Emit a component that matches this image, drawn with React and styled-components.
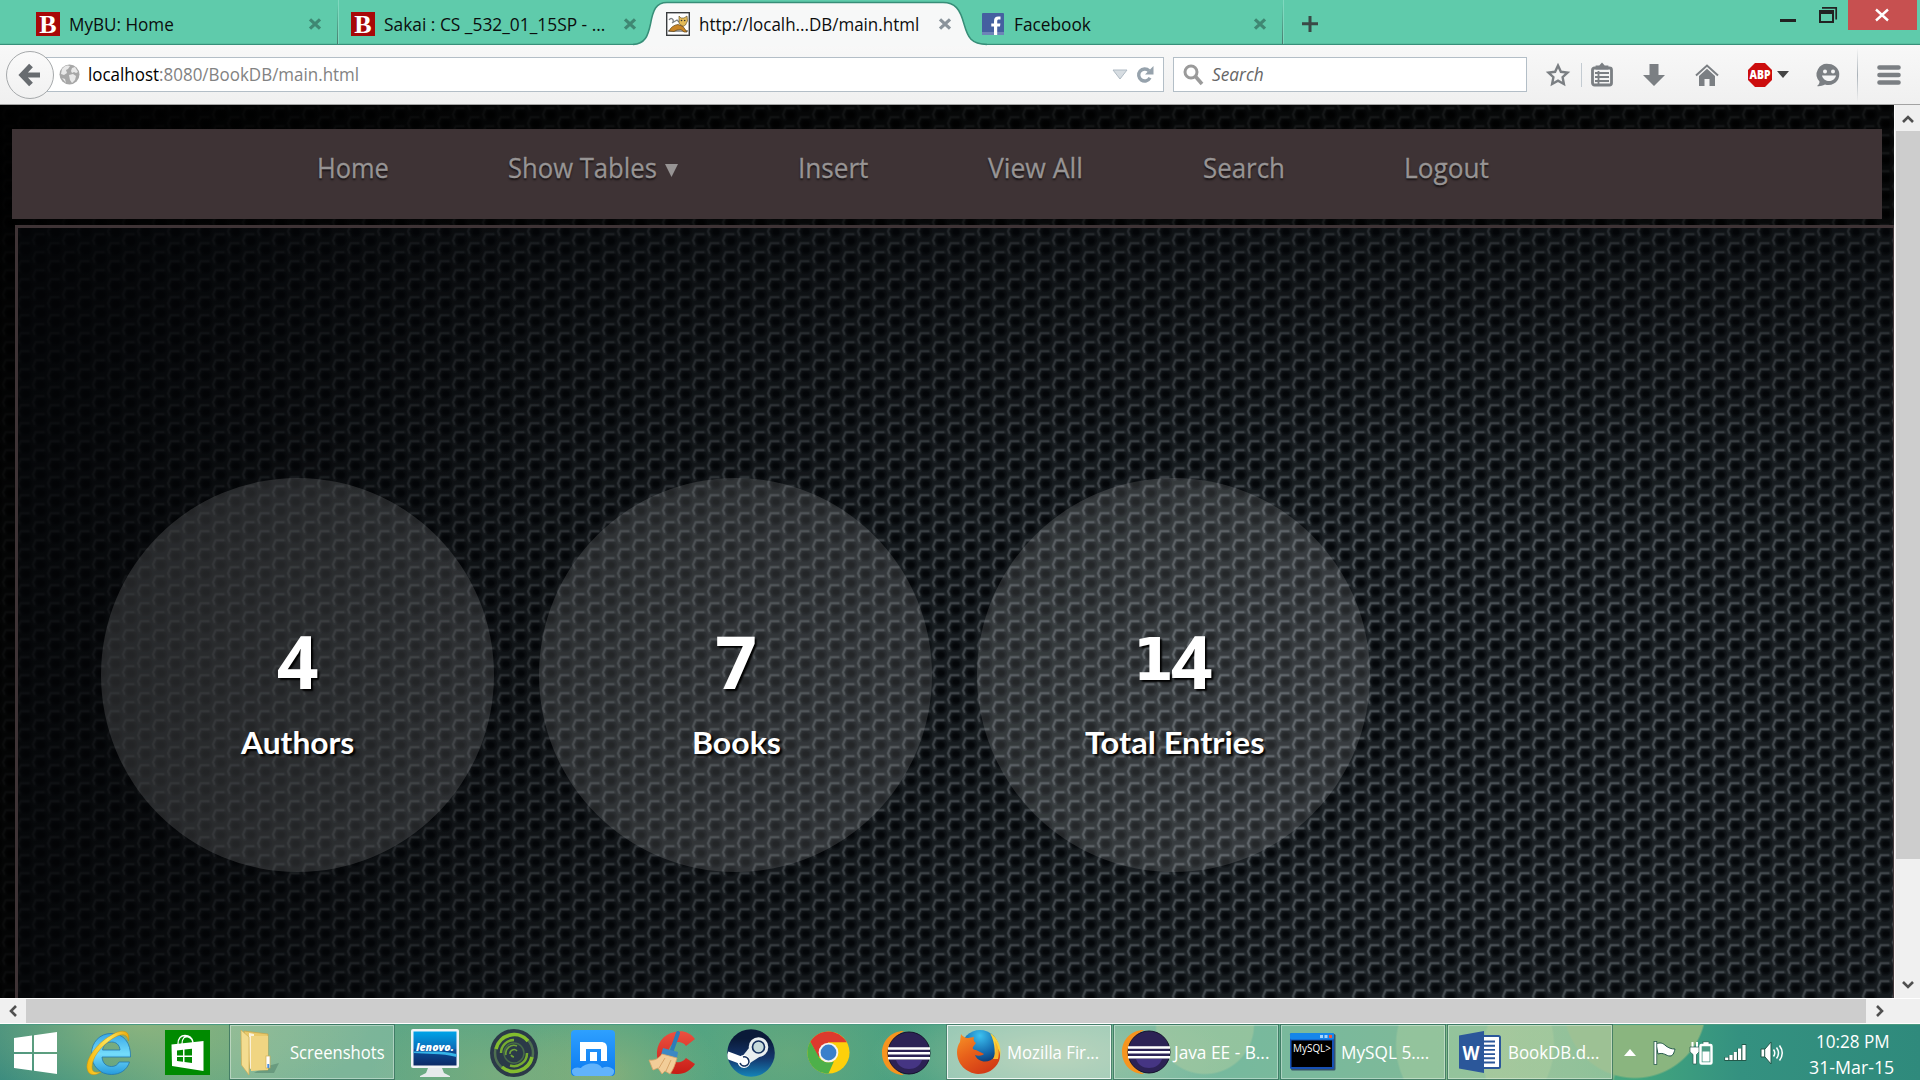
import React, { useLayoutEffect, useRef } from 'react';
import styled, { createGlobalStyle, css } from 'styled-components';

const Global = createGlobalStyle`
  * { box-sizing: border-box; }
  html, body { margin: 0; padding: 0; overflow: hidden; background: #000; }
  body { font-family: "Open Sans", "Noto Sans", sans-serif; }
  svg { display: block; flex: none; overflow: visible; }
`;

/* ---------- shared ---------- */

const FitBox = styled.span`
  display: block;
  flex: none;
  width: ${p => p.$w}px;
  margin-left: ${p => p.$ml || 0}px;
  white-space: pre;
`;
const FitInner = styled.span`
  display: inline-block;
  transform-origin: 0 50%;
`;

/* Text squeezed or stretched to a fixed label width. */
function Fit({ w, ml, children }) {
  const ref = useRef(null);
  useLayoutEffect(() => {
    const el = ref.current;
    el.style.transform = `scaleX(${w / el.offsetWidth})`;
  }, [w]);
  return (
    <FitBox $w={w} $ml={ml}>
      <FitInner ref={ref}>{children}</FitInner>
    </FitBox>
  );
}

const Slot = styled.div`
  flex: none;
  margin-left: ${p => p.$ml || 0}px;
  margin-top: ${p => p.$mt || 0}px;
`;

const Desktop = styled.div`
  width: 1920px;
  height: 1080px;
  display: flex;
  flex-direction: column;
  overflow: hidden;
`;

/* ---------- tab strip ---------- */

const TabStrip = styled.div`
  height: 45px;
  flex: none;
  display: flex;
  align-items: flex-start;
  background: linear-gradient(#5fcbab 0 43px, #58bfa1 43px 44px, #37907a 44px 45px);
`;
const Tab = styled.div`
  position: relative;
  flex: none;
  width: ${p => p.$w}px;
  height: 44px;
  padding-left: ${p => p.$pl}px;
  display: flex;
  align-items: flex-start;
  font-size: 17.3px;
  line-height: 24px;
  color: #0b0d0d;
  ${p => p.$line && css`
    border-right: 1px solid #3f8f7a;
    border-image: linear-gradient(rgba(70, 130, 115, 0) 10%, #48786c) 1;
    box-shadow: 1px 0 0 rgba(160, 230, 210, 0.5);
  `}
`;
const TabShape = styled.svg`
  position: absolute;
  left: -14px;
  top: 0;
  z-index: 0;
`;
const TabBody = styled.div`
  position: relative;
  z-index: 1;
  height: 48px;
  display: flex;
  align-items: center;
  ${FitBox} { padding-top: 1px; }
`;
const WindowButtons = styled.div`
  margin-left: auto;
  display: flex;
  align-items: flex-start;
  margin-right: 3px;
`;
const CloseButton = styled.div`
  width: 69px;
  height: 30px;
  padding-right: 2px;
  background: #c75050;
  display: flex;
  align-items: center;
  justify-content: center;
`;

const TabX = ({ color = '#3f8873' }) => (
  <svg width="14" height="14" viewBox="0 0 14 14">
    <path d="M2 2.3 12 11.7M12 2.3 2 11.7" stroke={color} strokeWidth="3.2" />
  </svg>
);

const BFavicon = () => (
  <svg width="24" height="24" viewBox="0 0 24 24">
    <rect width="24" height="24" fill="#a80808" />
    <text x="12" y="20.500" textAnchor="middle" fontFamily="Liberation Serif, serif" fontWeight="700" fontSize="26" fill="#fff">B</text>
  </svg>
);

const TomcatIcon = () => (
  <svg width="24" height="24" viewBox="0 0 24 24">
    <rect x=".7" y=".7" width="22.6" height="22.6" fill="#fff" stroke="#3a3d40" strokeWidth="1.4" />
    <path d="M3 8c2-3 5-1 4 2M6 11l5-3 2 2M2 19h20" stroke="#7c8084" strokeWidth="1.3" fill="none" />
    <path d="M13 4l2 2h3l3-2 .5 5-2 4-2.5 1.500-4-3z" fill="#e4bb58" stroke="#55431e" strokeWidth=".6" />
    <path d="M3 19c2-4 5-6 9-6.500l5 2 4 5.500h-3l-3-2.500-4 .5-3 1.500z" fill="#c98526" stroke="#5d4214" strokeWidth=".7" />
    <circle cx="15.500" cy="8.500" r=".8" fill="#333" /><circle cx="18.700" cy="8.500" r=".8" fill="#333" />
  </svg>
);

const FacebookIcon = () => (
  <svg width="22" height="22" viewBox="0 0 22 22">
    <rect width="22" height="22" rx="1" fill="#4560a0" />
    <rect y="19" width="22" height="3" fill="#6d83b7" />
    <path d="M12 22v-8.500H9.300v-3H12V8.200C12 5 13.600 3.600 16.300 3.600h2.200v3h-1.600c-1.300 0-1.700.6-1.700 1.800v2.100h3.200l-.4 3h-2.800V22z" fill="#fff" />
  </svg>
);

function Tabs() {
  return (
    <TabStrip>
      <Tab $w={338} $pl={36} $line>
        <TabBody>
          <BFavicon /><Fit w={105} ml={9}>MyBU: Home</Fit>
          <Slot $ml={134}><TabX /></Slot>
        </TabBody>
      </Tab>
      <Tab $w={309} $pl={13}>
        <TabBody>
          <BFavicon /><Fit w={221} ml={9}>Sakai : CS _532_01_15SP - ...</Fit>
          <Slot $ml={18}><TabX /></Slot>
        </TabBody>
      </Tab>
      <Tab $w={317} $pl={19} $active>
        <TabShape width="360" height="46" viewBox="0 0 360 46">
          <path d="M0 46V44.500C12 44 15 36 17.500 24C20 10 23 2.500 34 2.500H310C322 2.500 327 9 331 24C335 38 338 44 354 44.500V46Z" fill="#f7f8f8" />
          <path d="M0 44.500C12 44 15 36 17.500 24C20 10 23 2.500 34 2.500H310C322 2.500 327 9 331 24C335 38 338 44 354 44.500" fill="none" stroke="#378e78" strokeWidth="1.500" />
        </TabShape>
        <TabBody>
          <TomcatIcon /><Fit w={220} ml={9}>http://localh...DB/main.html</Fit>
          <Slot $ml={19}><TabX color="#8a939b" /></Slot>
        </TabBody>
      </Tab>
      <Tab $w={319} $pl={18} $line>
        <TabBody>
          <FacebookIcon /><Fit w={77} ml={10}>Facebook</Fit>
          <Slot $ml={162}><TabX /></Slot>
        </TabBody>
      </Tab>
      <Slot $ml={18} $mt={15}>
        <svg width="18" height="18" viewBox="0 0 18 18"><path d="M9 1v16M1 8.800h16" stroke="#3a4a46" strokeWidth="3" /></svg>
      </Slot>
      <WindowButtons>
        <Slot $mt={19}><svg width="16" height="3"><rect width="16" height="3" fill="#222" /></svg></Slot>
        <Slot $ml={23} $mt={7}>
          <svg width="18" height="16" viewBox="0 0 18 16">
            <path d="M3 .8h14.200V12.500" stroke="#222" strokeWidth="1.700" fill="none" />
            <path d="M1 4.500v10.500h13V4.500z" stroke="#222" strokeWidth="2" fill="none" />
            <rect x="0" y="3" width="15" height="4" fill="#222" />
          </svg>
        </Slot>
        <Slot $ml={11}>
          <CloseButton>
            <svg width="14" height="12" viewBox="0 0 14 12"><path d="M1 .5 13 11.500M13 .5 1 11.500" stroke="#fff" strokeWidth="2.400" /></svg>
          </CloseButton>
        </Slot>
      </WindowButtons>
    </TabStrip>
  );
}

/* ---------- toolbar ---------- */

const Toolbar = styled.div`
  height: 60px;
  flex: none;
  display: flex;
  align-items: center;
  background: linear-gradient(#f8f8f8, #f0f0f0);
  border-bottom: 1px solid #a3a3a3;
  font-size: 17.3px;
  line-height: 24px;
  ${FitBox} { padding-top: 1px; }
`;
const BackButton = styled.div`
  width: 48px;
  height: 48px;
  margin-left: 6px;
  border: 1.500px solid #a6a9ab;
  border-radius: 50%;
  background: linear-gradient(#fafafa, #f1f1f1);
  display: flex;
  align-items: center;
  justify-content: center;
  position: relative;
  z-index: 1;
`;
const Field = styled.div`
  height: 35px;
  width: ${p => p.$w}px;
  margin-left: ${p => p.$ml}px;
  padding-left: ${p => p.$pl}px;
  background: #fff;
  border: 1px solid #b3bec7;
  display: flex;
  align-items: center;
  color: ${p => p.$color};
  font-style: ${p => (p.$italic ? 'italic' : 'normal')};
`;
const Host = styled.span`color: #000;`;
const Divider = styled.div`
  width: 1px;
  height: ${p => p.$h}px;
  margin-left: ${p => p.$ml}px;
  background: ${p => (p.$fade ? 'linear-gradient(rgba(170,180,190,0), #a9b1b8, rgba(170,180,190,0))' : '#c3cbd2')};
`;

const grey = '#7b7f83';

function BrowserToolbar() {
  return (
    <Toolbar>
      <BackButton>
        <svg width="22" height="24" viewBox="0 0 22 24"><path d="M12 2.500 3 12l9 9.500M4 12h17" stroke="#686c70" strokeWidth="5.200" fill="none" /></svg>
      </BackButton>
      <Field $w={1118} $ml={-8} $pl={12} $color="#828282">
        <svg width="21" height="21" viewBox="0 0 21 21">
          <circle cx="10.500" cy="10.500" r="10" fill="#a7a7a7" />
          <path d="M3 5c3-4 6-4 8-3l-2 3-2 1 1 3-3 2-3-1zM13 4l3-1 3 5-2 1-2-1-2 1-1-2zM10 11l4-1 3 2-1 4-3 3-2-3zM3 14l3 1 1 4z" fill="#e8e8e8" />
        </svg>
        <Fit w={271} ml={8}><Host>localhost</Host>:8080/BookDB/main.html</Fit>
        <Slot $ml={753}><svg width="16" height="11" viewBox="0 0 16 11"><path d="M1 1h14L8 10z" fill="#d7dde2" stroke="#b0bbc4" /></svg></Slot>
        <Slot $ml={8}>
          <svg width="18" height="18" viewBox="0 0 18 18">
            <path d="M14 11.800A6 6 0 1 1 13 4.800" stroke="#96a2ac" strokeWidth="3.400" fill="none" />
            <path d="M17.500 0v8.500H9z" fill="#96a2ac" />
          </svg>
        </Slot>
      </Field>
      <Field $w={354} $ml={9} $pl={9} $color="#666" $italic>
        <svg width="21" height="22" viewBox="0 0 21 22"><circle cx="8" cy="8" r="6" stroke="#9a9a9a" strokeWidth="3" fill="none" /><path d="M12.500 12.500 19 20" stroke="#9a9a9a" strokeWidth="3.600" /></svg>
        <Fit w={52} ml={8}>Search</Fit>
      </Field>
      <Slot $ml={19}>
        <svg width="24" height="24" viewBox="0 0 24 24"><path d="M12 2.500l2.900 6.300 6.600.8-4.900 4.500 1.300 6.900L12 17.700 6.100 21l1.300-6.900L2.500 9.600l6.600-.8z" fill="none" stroke={grey} strokeWidth="2.400" /></svg>
      </Slot>
      <Divider $h={24} $ml={11} />
      <Slot $ml={9}>
        <svg width="22" height="24" viewBox="0 0 22 24">
          <rect x="1.500" y="5" width="19" height="17" rx="2" fill="none" stroke={grey} strokeWidth="2.800" />
          <path d="M5.500 5.500V3.500h3L11 .8l2.500 2.700h3v2zM4 10h14M4 14h14M4 18h14M7.500 8v13" stroke={grey} strokeWidth="1.800" fill="none" />
          <path d="M5.500 5.500V3.500h3L11 .8l2.500 2.700h3v2z" fill={grey} />
        </svg>
      </Slot>
      <Slot $ml={30}><svg width="22" height="22" viewBox="0 0 22 22"><path d="M6.500 0h9v11H22L11 22 0 11h6.500z" fill={grey} /></svg></Slot>
      <Slot $ml={30}>
        <svg width="24" height="22" viewBox="0 0 24 22"><path d="M1 11.500 12 1.500l11 10" stroke={grey} strokeWidth="2" fill="none" /><path d="M4 12 12 4.800 20 12v10h-5.500v-7h-5v7H4z" fill={grey} /></svg>
      </Slot>
      <Slot $ml={29}>
        <svg width="24" height="24" viewBox="0 0 24 24">
          <path d="M7 0h10l7 7v10l-7 7H7l-7-7V7z" fill="#cc0d0d" />
          <text x="12" y="16" textAnchor="middle" textLength="21" lengthAdjust="spacingAndGlyphs" fontFamily="Open Sans, sans-serif" fontWeight="800" fontSize="11.500" fill="#fff">ABP</text>
        </svg>
      </Slot>
      <Slot $ml={5}><svg width="12" height="7"><path d="M0 0h12L6 7z" fill="#444" /></svg></Slot>
      <Slot $ml={27}>
        <svg width="25" height="24" viewBox="0 0 25 24">
          <path d="M13 1a11 10.500 0 1 1-4 20.500C6 23 3 23.500 1 23c2-1.500 2.500-3 2.500-4.500A10.500 10.500 0 0 1 13 1z" fill={grey} />
          <circle cx="9" cy="8.500" r="2" fill="#f4f4f4" /><circle cx="17" cy="8.500" r="2" fill="#f4f4f4" />
          <path d="M6 12.500h14c-1 4-4 5.500-7 5.500s-6-1.500-7-5.500z" fill="#f4f4f4" />
        </svg>
      </Slot>
      <Divider $h={54} $ml={16} $fade />
      <Slot $ml={19}>
        <svg width="24" height="20" viewBox="0 0 24 20"><path d="M2.500 2.500h19M2.500 10h19M2.500 17.500h19" stroke={grey} strokeWidth="4.600" strokeLinecap="round" /></svg>
      </Slot>
    </Toolbar>
  );
}

/* ---------- page ---------- */

const Viewport = styled.div`
  display: flex;
  height: 893px;
  flex: none;
`;
const Page = styled.div`
  position: relative;
  width: 1894px;
  flex: none;
  overflow: hidden;
  background: #000;
`;
const Backdrop = styled.div`
  position: absolute;
  inset: 0;
  &::after {
    content: '';
    position: absolute;
    inset: 0;
    background:
      linear-gradient(90deg, rgba(0,0,0,.5), rgba(0,0,0,.25) 14%, rgba(0,0,0,0) 30%),
      radial-gradient(ellipse 1650px 1250px at 1450px 620px, rgba(0,0,0,0) 15%, rgba(0,0,0,.84) 100%),
      linear-gradient(rgba(0,0,0,.6) 0 24px, rgba(0,0,0,.6) 120px, rgba(0,0,0,.3) 123px, rgba(0,0,0,0) 420px);
  }
`;
const PageContent = styled.div`
  position: relative;
  height: 893px;
  padding-top: 24px;
`;
const Nav = styled.nav`
  width: 1870px;
  height: 90px;
  margin-left: 12px;
  padding: 20px 0 0 305px;
  background: #3e3335;
  display: flex;
  align-items: flex-start;
  font-family: "Open Sans", "Noto Sans", sans-serif;
  font-size: 26.500px;
  line-height: 39px;
  color: #979494;
  -webkit-text-stroke: 0.3px #979494;
  text-shadow: 0 2px 2px #171213;
`;
const Panel = styled.main`
  width: 1881px;
  height: 800px;
  margin: 6px 0 0 15px;
  border: 3px solid #3e3335;
  padding: 250px 0 0 83px;
  background: rgba(30, 40, 55, 0.1);
  display: flex;
  gap: 45px;
`;
const Disc = styled.section`
  width: 393px;
  height: 394px;
  flex: none;
  border-radius: 50%;
  background: rgba(255, 255, 255, 0.13);
  display: flex;
  flex-direction: column;
  align-items: center;
  color: #fff;
  padding-top: 146px;
  padding-left: ${p => p.$shift || 0}px;
  font-weight: 700;
  text-shadow: 2px 2px 2px #000;
`;
const Count = styled.div`
  height: 74px;
  display: flex;
  align-items: baseline;
  font-size: 73px;
  line-height: 74px;
`;
const ShortDigit = styled.span`
  font-family: "DejaVu Sans", sans-serif;
  font-size: 59px;
  line-height: 59px;
  position: relative;
  top: -9px;
  width: 38px;
  margin-left: -4px;
`;
const Caption = styled.div`
  margin-top: 26px;
  font-family: "Lato", "Open Sans", sans-serif;
  font-weight: 700;
  font-size: 29.500px;
  line-height: 38px;
`;

const Honeycomb = () => {
  const cell = (x, y, k) => (
    <g key={k} transform={`translate(${x} ${y})`}>
      <ellipse cx=".4" cy=".4" rx="6.600" ry="6.400" fill="#101416" />
      <path d="M-5.200 5-7 .5-4.300-5.800H4" fill="none" stroke="#3a4043" strokeWidth="3.800" strokeLinejoin="round" strokeLinecap="round" opacity=".45" />
      <path d="M-5.600 4-7 .3-4.300-5.800H3.400" fill="none" stroke="#585e61" strokeWidth="2" strokeLinejoin="round" strokeLinecap="round" opacity=".8" />
      <ellipse cx=".8" cy="1" rx="4.600" ry="4.200" fill="#080b0d" />
      <ellipse cx="1" cy="1" rx="3.200" ry="2.800" fill="#020405" />
    </g>
  );
  return (
    <svg width="1894" height="893">
      <defs>
        <pattern id="mesh" width="30" height="18" patternUnits="userSpaceOnUse" x="10" y="9">
          <rect width="30" height="18" fill="#1b2022" />
          {[[15, -9], [0, 0], [30, 0], [15, 9], [0, 18], [30, 18], [15, 27]].map(([x, y], i) => cell(x, y, i))}
        </pattern>
      </defs>
      <rect width="1894" height="893" fill="url(#mesh)" />
    </svg>
  );
};

/* ---------- scrollbars ---------- */

const VBar = styled.div`
  width: 26px;
  background: #f0f0f0;
  border-left: 1px solid #fff;
  display: flex;
  flex-direction: column;
  align-items: center;
`;
const HBar = styled.div`
  height: 26px;
  flex: none;
  background: #f0f0f0;
  border-top: 1px solid #fff;
  border-bottom: 1px solid #fff;
  display: flex;
  align-items: center;
`;
const ScrollButton = styled.div`
  width: ${p => p.$w}px;
  height: ${p => p.$h}px;
  padding-top: ${p => p.$pt || 0}px;
  padding-right: ${p => p.$pr || 0}px;
  flex: none;
  display: flex;
  align-items: center;
  justify-content: center;
`;
const Thumb = styled.div`
  flex: none;
  width: ${p => p.$w}px;
  height: ${p => p.$h}px;
  background: #cdcdcd;
`;
const Chevron = ({ turn }) => (
  <svg width="12" height="12" viewBox="0 0 12 12"><path d="M1 9 6 4 11 9" transform={`rotate(${turn} 6 6)`} stroke="#505050" strokeWidth="2.600" fill="none" /></svg>
);

/* ---------- taskbar ---------- */

const TaskbarRow = styled.div`
  height: 56px;
  flex: none;
  display: flex;
  align-items: center;
  color: #fff;
  font-size: 18px;
  line-height: 26px;
  border-top: 1px solid #4a9a80;
  background:
    radial-gradient(circle at 1635px -18px, #8ab57f 0 70px, transparent 72px),
    radial-gradient(ellipse 110px 130px at 1550px 30px, rgba(165,195,140,.5) 0 60%, transparent 62%),
    radial-gradient(circle at 1205px 0, rgba(160,195,140,.5) 0 48px, transparent 50px),
    radial-gradient(circle at 1475px 20px, rgba(150,195,140,.5) 0 78px, transparent 80px),
    radial-gradient(ellipse 230px 90px at 140px 0, rgba(155,185,125,.75), transparent),
    radial-gradient(ellipse 130px 70px at 500px 50px, rgba(150,180,120,.5), transparent),
    radial-gradient(ellipse 110px 80px at 610px 50px, rgba(150,180,120,.7), transparent),
    radial-gradient(ellipse 140px 90px at 790px 30px, rgba(130,175,120,.5), transparent),
    radial-gradient(ellipse 180px 60px at 1050px 30px, rgba(160,190,150,.8), transparent),
    linear-gradient(90deg, #31877f 0, #3c9381 70px, #62a682 180px, #63a785 350px, #4ba283 700px, #459f82 900px, #58ab8d 1150px, #68ab82 1500px, #42a57e 1640px, #349180 1740px, #2f8a7c 1920px);
`;
const TaskButton = styled.div`
  width: 166px;
  height: 56px;
  margin-left: ${p => p.$ml}px;
  margin-top: -1px;
  flex: none;
  border: 1px solid rgba(45, 105, 85, 0.75);
  box-shadow: inset 0 0 0 1px ${p => (p.$active ? 'rgba(255,255,255,.8)' : 'rgba(255,255,255,.38)')};
  background: ${p => (p.$active ? 'rgba(255,255,255,.38)' : 'rgba(255,255,255,.17)')};
  display: flex;
  align-items: center;
`;
const Clock = styled.div`
  display: flex;
  flex-direction: column;
  margin-left: 25px;
  margin-top: 2px;
  line-height: 26px;
`;

const StartIcon = () => (
  <svg width="43" height="42" viewBox="0 0 43 42"><path d="M0 6 18 3.500V20H0zM20 3.200 43 0V20H20zM0 22H18V38.500L0 36zM20 22H43V42L20 38.800z" fill="#fff" /></svg>
);
const IEIcon = () => (
  <svg width="46" height="46" viewBox="0 0 46 46">
    <defs>
      <linearGradient id="ieb" x2="0" y2="1"><stop stopColor="#38a8e8" /><stop offset=".5" stopColor="#74dcfb" /><stop offset="1" stopColor="#279bdc" /></linearGradient>
      <linearGradient id="iey" x2="1" y2="0"><stop stopColor="#f5b80d" /><stop offset=".5" stopColor="#ffe65a" /><stop offset="1" stopColor="#eca90a" /></linearGradient>
    </defs>
    <path d="M25 3.500C38 3.500 45 13 44.500 27H16C16.500 33 20 36.500 25.500 36.500c3.500 0 6-1.500 7.500-4.500H43.500C41 40 34 44.500 25.500 44.500 14 44.500 5.500 36 5.500 24S14 3.500 25 3.500zM16.500 20H34C33.500 14.500 30 12 25.500 12S17.500 14.500 16.500 20z" fill="url(#ieb)" stroke="#2377ae" strokeWidth=".8" />
    <path d="M42.500 11C45-1 34-1 24 6 10 14 0 29 1 38c1 8 8 8 14 4-6 1-9 0-9-5C6 28 14 17 26 9 35 3 41 3 42.500 11z" fill="url(#iey)" stroke="#c98f08" strokeWidth=".5" />
  </svg>
);
const StoreIcon = () => (
  <svg width="45" height="45" viewBox="0 0 45 45">
    <rect width="45" height="45" fill="#008a00" />
    <path d="M13 14C13 8 16 5.500 20 5.500S27 8 28 12M17 14C17 8 20 6 23 7s5 3 5 7" stroke="#fff" strokeWidth="1.300" fill="none" />
    <path d="M6.500 14.500 38.500 11V41L7 36z" fill="#fff" />
    <path d="M12 20.500 18 19.800V25.500H12zM19.500 19.600 27 18.800V25.500H19.500zM12 27H18V31.800L12 31zM19.500 27H27V33L19.500 32z" fill="#008a00" />
  </svg>
);
const FolderIcon = () => (
  <svg width="40" height="47" viewBox="0 0 40 47">
    <path d="M24 38 39 34 34 44 14 44z" fill="#2a5a48" opacity=".3" />
    <path d="M4 2 28 5V41L10 40z" fill="#e9c96a" stroke="#c9a549" strokeWidth=".7" />
    <path d="M9 4 14 5V38L10 40z" fill="#fff" opacity=".75" />
    <path d="M1 1 9 8V46L1.500 36z" fill="#f3dc90" stroke="#cfae55" strokeWidth=".7" />
    <path d="M11 7H28V41L11 42z" fill="#f0d582" />
    <rect x="26" y="27" width="4" height="12" fill="#fff" stroke="#d0ac50" strokeWidth=".7" /><rect x="27.300" y="35" width="2" height="4" fill="#4a90e0" />
  </svg>
);
const LenovoIcon = () => (
  <svg width="48" height="48" viewBox="0 0 48 48">
    <defs><linearGradient id="lnv" x2="0" y2="1"><stop stopColor="#00a4e8" /><stop offset=".5" stopColor="#0a6cb8" /><stop offset=".55" stopColor="#0b4c96" /><stop offset="1" stopColor="#0c2a66" /></linearGradient></defs>
    <rect width="48" height="39" rx="2" fill="#f2f4f6" />
    <rect x="2.500" y="2.500" width="43" height="34" fill="url(#lnv)" />
    <path d="M2.500 24c12 1 28 0 43 4v-3c-15-4-30-2-43-2.500z" fill="#35b4e8" />
    <text x="24" y="22" textAnchor="middle" textLength="38" lengthAdjust="spacingAndGlyphs" fontFamily="Open Sans, sans-serif" fontStyle="italic" fontWeight="800" fontSize="10" fill="#fff">lenovo.</text>
    <path d="M17 39H31L33 44 39 47V48H9V47L15 44z" fill="#e6eaec" />
  </svg>
);
const SwirlIcon = () => (
  <svg width="48" height="48" viewBox="0 0 48 48">
    <circle cx="24" cy="24" r="24" fill="#2b3a48" />
    <circle cx="24" cy="24" r="19" fill="none" stroke="#4e7050" strokeWidth="2.500" />
    <path d="M6 20A18.500 18.500 0 0 1 38 12M42 28A18.500 18.500 0 0 1 12 38" stroke="#83bd2e" strokeWidth="3.500" fill="none" />
    <path d="M11 24A13 13 0 0 1 24 11M37 24A13 13 0 0 1 20 36.500" stroke="#76ac30" strokeWidth="2.500" fill="none" />
    <circle cx="24" cy="24" r="10" fill="none" stroke="#466a48" strokeWidth="1.500" />
    <path d="M16 26A8 8 0 0 1 27 17M20 25a4 4 0 0 1 7-3M21 26a4 4 0 0 0 3 2" stroke="#6fa338" strokeWidth="1.600" fill="none" />
  </svg>
);
const MaxthonIcon = () => (
  <svg width="44" height="46" viewBox="0 0 44 46">
    <defs><linearGradient id="mx" x2="0" y2="1"><stop stopColor="#2ea0ff" /><stop offset="1" stopColor="#0b7af0" /></linearGradient></defs>
    <rect width="44" height="46" rx="4" fill="url(#mx)" />
    <path d="M9 31V12H30C34 12 36 14 36 18V31H30V19H15V31zM19 31V22H26V31H23.800V31z" fill="#fff" />
    <path d="M1 40c2-3 6-3 9-2 3-5 18-7 21 0 4-2 8-2 12 2v2c0 2-2 4-4 4H5c-2 0-4-2-4-4z" fill="#61b3fb" />
  </svg>
);
const CCleanerIcon = () => (
  <svg width="48" height="46" viewBox="0 0 48 46">
    <defs><linearGradient id="ccr" x2="0" y2="1"><stop stopColor="#ec5140" /><stop offset="1" stopColor="#c81c16" /></linearGradient></defs>
    <path d="M47 9C42 2 34 0 27 2 15 4 8 14 9 26c1 11 10 19 21 18 7 0 13-4 17-10l-9-6c-3 4-7 5-10 4-6-1-8-6-7-12 1-5 5-8 9-8 3 0 6 1 8 4z" fill="url(#ccr)" />
    <path d="M30 3 24 20" stroke="#2c7cb8" strokeWidth="4" strokeLinecap="round" />
    <path d="M15 18 30 22 29 28 13 25z" fill="#3b88c4" />
    <path d="M14 24 29 28C27 35 25 40 22 44L17 41 14 44 10 38 5 40 1 30C7 31 11 28 14 24z" fill="#f2cd98" stroke="#d9a468" strokeWidth=".8" />
    <path d="M17 28 11 38M23 30 18 41" stroke="#d8a468" />
  </svg>
);
const SteamIcon = () => (
  <svg width="48" height="48" viewBox="0 0 48 48">
    <defs>
      <linearGradient id="stm" x2="0" y2="1"><stop offset=".2" stopColor="#0a1a38" /><stop offset=".6" stopColor="#14356b" /><stop offset="1" stopColor="#1584b8" /></linearGradient>
      <clipPath id="stc"><circle cx="24" cy="24" r="23.800" /></clipPath>
    </defs>
    <circle cx="24" cy="24" r="23.800" fill="url(#stm)" />
    <g clipPath="url(#stc)">
      <path d="M0 26 16 32" stroke="#fff" strokeWidth="7.500" />
      <circle cx="31.500" cy="18" r="9.800" fill="#e9eff0" />
      <path d="M22 19 14 29 23 34 37 25z" fill="#e9eff0" />
      <circle cx="31.500" cy="18" r="6" fill="#c7dbdc" stroke="#14305e" strokeWidth="1.700" />
      <circle cx="17" cy="32.500" r="6.500" fill="#fff" />
      <path d="M13 34a4.600 4.600 0 1 0 3-6" fill="none" stroke="#14305e" strokeWidth="1.600" />
    </g>
  </svg>
);
const ChromeIcon = () => (
  <svg width="43" height="43" viewBox="0 0 48 48">
    <circle cx="24" cy="24" r="23.500" fill="#fdd00b" />
    <path d="M24 .5C32 .5 40 5 44.500 12.500H24L13 30 3.700 12C8 5 15.500.5 24 .5z" fill="#dd3a2e" />
    <path d="M3.700 12 14 30C18 35 24 36 30 34L24 47.500C11 47.500.5 37 .5 24 .5 19.500 1.700 15.500 3.700 12z" fill="#4db04a" />
    <circle cx="24" cy="24" r="11" fill="#f4f4f4" /><circle cx="24" cy="24" r="8.800" fill="#3a7fcb" />
  </svg>
);
const EclipseIcon = () => (
  <svg width="48" height="44" viewBox="0 0 48 44">
    <path d="M22 0C9 0 0 10 0 22S9 44 22 44C14 40 9 32 9 22S14 4 22 0z" fill="#f7941e" />
    <circle cx="27" cy="22" r="21" fill="#2c2255" stroke="#14112c" strokeWidth="1" />
    <path d="M14 29H40C38 35 33 38 27 38S16 35 14 29z" fill="#453583" />
    <path d="M6 17.500H48M6 22.300H48M6 27.200H48" stroke="#fff" strokeWidth="2.500" />
  </svg>
);
const FirefoxIcon = () => (
  <svg width="44" height="44" viewBox="0 0 44 44">
    <defs>
      <radialGradient id="ffb" cx=".5" cy=".15" r=".8"><stop stopColor="#3cc1f0" /><stop offset=".6" stopColor="#1468ac" /><stop offset="1" stopColor="#0b2c62" /></radialGradient>
      <linearGradient id="ffo" x2=".6" y2="1"><stop stopColor="#f79327" /><stop offset=".5" stopColor="#e8601a" /><stop offset="1" stopColor="#d23a16" /></linearGradient>
    </defs>
    <circle cx="23" cy="19" r="19" fill="url(#ffb)" />
    <path d="M33 3C41 8 45 17 43 27L37 34C38 25 39 14 33 3z" fill="#fbd23a" />
    <path d="M4 4C5 6 8 8 11 8L17 7C16 10 17 12 19 13L16 17C15 19 17 20 19 20L27 24C25 26 21 26 18 25 21 33 33 34 38 26L40 18C43 20 44 26 42 31 38 40 30 44 21 44 9 43 0 34 0 22 0 18 1 15 3 12z" fill="url(#ffo)" />
    <path d="M36 29c3-5 3-12 2-18 3 4 5 11 3 18z" fill="#f9b42d" />
  </svg>
);
const MySQLIcon = () => (
  <svg width="46" height="38" viewBox="0 0 46 38">
    <rect x="1" y="1" width="44.500" height="36.500" fill="#1d2b57" opacity=".7" rx="1.500" />
    <rect width="44" height="36" rx="1.500" fill="#1750b4" /><rect width="44" height="6.500" rx="1.500" fill="#1686ea" />
    <rect x="30" y="2" width="3" height="3" fill="#a8d4fa" /><rect x="34.500" y="2" width="3" height="3" fill="#a8d4fa" /><rect x="39" y="2" width="3" height="3" fill="#ee5a36" />
    <rect x="1.500" y="7.500" width="40.500" height="26.500" fill="#000" />
    <text x="3" y="19" textLength="38" lengthAdjust="spacingAndGlyphs" fontFamily="Open Sans, sans-serif" fontSize="11" fill="#fff">MySQL&gt;</text>
  </svg>
);
const WordIcon = () => (
  <svg width="43" height="42" viewBox="0 0 43 42">
    <rect x="22" y="5" width="19" height="32" rx="1.500" fill="#fff" stroke="#2b579a" strokeWidth="2" />
    <path d="M24 10.500H36M24 14.700H36M24 18.900H36M24 23.100H36M24 27.300H36M24 31.500H36" stroke="#2b579a" strokeWidth="1.900" />
    <path d="M0 4.500 25 0V42L0 37.500z" fill="#2b579a" />
    <text x="12" y="28.500" textAnchor="middle" textLength="17" lengthAdjust="spacingAndGlyphs" fontFamily="Open Sans, sans-serif" fontWeight="700" fontSize="20" fill="#fff">W</text>
  </svg>
);
const edge = '#23584a';
const FlagIcon = () => (
  <svg width="24" height="24" viewBox="0 0 24 24"><path d="M3 3C7 1 10 2 13 5c3 2 5 3 9 3-1 4-2 7-5 7-4 0-6-4-12-2z" fill="#fff" stroke={edge} /><rect x="1" y=".5" width="2.800" height="23" fill="#fff" stroke={edge} strokeWidth=".8" /></svg>
);
const BatteryIcon = () => (
  <svg width="24" height="24" viewBox="0 0 24 24">
    <path d="M3.500 1V6M8 1V6" stroke="#fff" strokeWidth="2" /><path d="M1 6H10V11L7.500 13.500V23H4V13.500L1 11z" fill="#fff" stroke={edge} strokeWidth=".7" />
    <rect x="14" y=".8" width="6" height="4" fill="#fff" stroke={edge} strokeWidth=".7" />
    <rect x="11.500" y="4" width="11" height="18.500" rx="1" fill="#4a9a84" stroke="#fff" strokeWidth="2.400" /><rect x="13.500" y="10.500" width="7" height="10" fill="#fff" />
  </svg>
);
const SignalIcon = () => (
  <svg width="21" height="17" viewBox="0 0 21 17"><path d="M1.700 17V13M6 17V11M10.300 17V8M14.600 17V4.500M19 17V0" stroke={edge} strokeWidth="4.600" /><path d="M1.700 16V13.400M6 16V11M10.300 16V8M14.600 16V4.500M19 16V1" stroke="#fff" strokeWidth="3.200" /></svg>
);
const SpeakerIcon = () => (
  <svg width="24" height="24" viewBox="0 0 24 24">
    <path d="M1 8H5L11 1V23L5 16H1z" fill="#fff" stroke={edge} strokeWidth="1" /><path d="M4.700 8v8" stroke={edge} />
    <path d="M13.500 8.500q2.500 3.500 0 7M16.500 6.500q4 5.500 0 11M19.500 4.500q5.500 7.500 0 15" stroke="#fff" strokeWidth="1.500" fill="none" />
  </svg>
);

function Taskbar() {
  return (
    <TaskbarRow>
      <Slot $ml={14}><StartIcon /></Slot>
      <Slot $ml={29}><IEIcon /></Slot>
      <Slot $ml={33}><StoreIcon /></Slot>
      <TaskButton $ml={19}><Slot $ml={10}><FolderIcon /></Slot><Fit w={95} ml={10}>Screenshots</Fit></TaskButton>
      <Slot $ml={16}><LenovoIcon /></Slot>
      <Slot $ml={31}><SwirlIcon /></Slot>
      <Slot $ml={33}><MaxthonIcon /></Slot>
      <Slot $ml={33}><CCleanerIcon /></Slot>
      <Slot $ml={31}><SteamIcon /></Slot>
      <Slot $ml={32}><ChromeIcon /></Slot>
      <Slot $ml={32}><EclipseIcon /></Slot>
      <TaskButton $ml={16} $active><Slot $ml={10}><FirefoxIcon /></Slot><Fit w={92} ml={6}>Mozilla Fir...</Fit></TaskButton>
      <TaskButton $ml={1}><Slot $ml={8}><EclipseIcon /></Slot><Fit w={95} ml={4}>Java EE - B...</Fit></TaskButton>
      <TaskButton $ml={1}><Slot $ml={9}><MySQLIcon /></Slot><Fit w={88} ml={5}>MySQL 5....</Fit></TaskButton>
      <TaskButton $ml={1}><Slot $ml={11}><WordIcon /></Slot><Fit w={91} ml={6}>BookDB.d...</Fit></TaskButton>
      <Slot $ml={11}><svg width="12" height="7"><path d="M0 7 6 0 12 7z" fill="#fff" /></svg></Slot>
      <Slot $ml={17}><FlagIcon /></Slot>
      <Slot $ml={12}><BatteryIcon /></Slot>
      <Slot $ml={12}><SignalIcon /></Slot>
      <Slot $ml={14}><SpeakerIcon /></Slot>
      <Clock><Fit w={74} ml={7}>10:28 PM</Fit><Fit w={85}>31-Mar-15</Fit></Clock>
    </TaskbarRow>
  );
}

export default function App() {
  return (
    <Desktop>
      <Global />
      <Tabs />
      <BrowserToolbar />
      <Viewport>
        <Page>
          <Backdrop><Honeycomb /></Backdrop>
          <PageContent>
            <Nav>
              <Fit w={72}>Home</Fit>
              <Fit w={149} ml={119}>Show Tables</Fit>
              <Slot $ml={8} $mt={15}><svg width="13" height="13" viewBox="0 0 13 13"><path d="M0 0H13L6.500 13z" fill="#979494" /></svg></Slot>
              <Fit w={70} ml={120}>Insert</Fit>
              <Fit w={95} ml={120}>View All</Fit>
              <Fit w={82} ml={120}>Search</Fit>
              <Fit w={85} ml={119}>Logout</Fit>
            </Nav>
            <Panel>
              <Disc $shift={0}><Count>4</Count><Caption><Fit w={113}>Authors</Fit></Caption></Disc>
              <Disc $shift={1}><Count>7</Count><Caption><Fit w={89}>Books</Fit></Caption></Disc>
              <Disc $shift={2}><Count><ShortDigit>1</ShortDigit>4</Count><Caption><Fit w={180}>Total Entries</Fit></Caption></Disc>
            </Panel>
          </PageContent>
        </Page>
        <VBar>
          <ScrollButton $w={24} $h={26} $pt={2}><Chevron turn={0} /></ScrollButton>
          <Thumb $w={24} $h={728} />
          <ScrollButton $w={24} $h={113} />
          <ScrollButton $w={24} $h={26}><Chevron turn={180} /></ScrollButton>
        </VBar>
      </Viewport>
      <HBar>
        <ScrollButton $w={26} $h={24} $pr={1}><Chevron turn={-90} /></ScrollButton>
        <Thumb $w={1840} $h={24} />
        <ScrollButton $w={28} $h={24}><Chevron turn={90} /></ScrollButton>
      </HBar>
      <Taskbar />
    </Desktop>
  );
}
